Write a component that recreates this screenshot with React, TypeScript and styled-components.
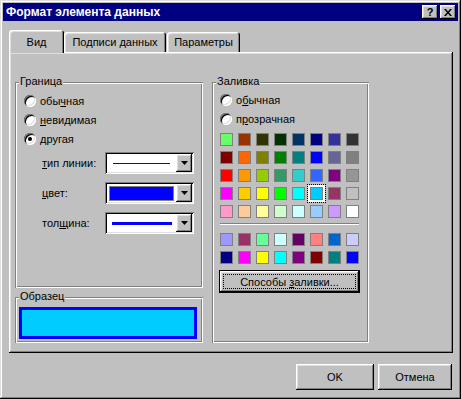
import styled, { createGlobalStyle, css } from "styled-components";

const GlobalStyle = createGlobalStyle`
  html, body {
    margin: 0;
    padding: 0;
    background: #c0c0c0;
  }
  body {
    font-family: "Liberation Sans", Arial, sans-serif;
    font-size: 11px;
    color: #000;
  }
`;

const raised = css`
  box-shadow: inset -1px -1px 0 #000, inset 1px 1px 0 #fff,
    inset -2px -2px 0 #808080, inset 2px 2px 0 #dfdfdf;
`;

const sunken = css`
  box-shadow: inset 1px 1px 0 #808080, inset -1px -1px 0 #fff,
    inset 2px 2px 0 #000, inset -2px -2px 0 #dfdfdf;
`;

const etched = css`
  box-shadow: inset 1px 1px 0 #808080, inset -1px -1px 0 #fff,
    inset 2px 2px 0 #fff, inset -2px -2px 0 #808080;
`;

const Window = styled.div`
  width: 461px;
  height: 399px;
  box-sizing: border-box;
  padding: 3px;
  display: flex;
  flex-direction: column;
  background: #c0c0c0;
  box-shadow: inset -1px -1px 0 #000, inset 1px 1px 0 #dfdfdf,
    inset -2px -2px 0 #808080, inset 2px 2px 0 #fff;
`;

const TitleBar = styled.div`
  height: 18px;
  flex: none;
  display: flex;
  align-items: center;
  padding: 0 2px 0 3px;
  background: #000080;
  color: #fff;
  font-weight: bold;
  font-size: 12px;
`;

const TitleButtons = styled.div`
  display: flex;
  gap: 2px;
  margin-left: auto;
`;

const TitleButton = styled.div`
  width: 16px;
  height: 14px;
  display: grid;
  place-items: center;
  background: #c0c0c0;
  color: #000;
  font-size: 11px;
  font-weight: bold;
  line-height: 1;
  ${raised}
`;

const Body = styled.div`
  flex: 1;
  display: flex;
  flex-direction: column;
  padding: 9px 5px 0 6px;
`;

const TabStrip = styled.div`
  height: 22px;
  display: flex;
  align-items: flex-end;
  position: relative;
  z-index: 1;
`;

const Tab = styled.div<{ $active?: boolean; $w: number; $gap?: number }>`
  width: ${(p) => p.$w}px;
  height: ${(p) => (p.$active ? 23 : 20)}px;
  margin-left: ${(p) => p.$gap ?? 0}px;
  margin-bottom: ${(p) => (p.$active ? -1 : 0)}px;
  box-sizing: border-box;
  display: flex;
  align-items: center;
  justify-content: center;
  padding-top: ${(p) => (p.$active ? 1 : 0)}px;
  background: #c0c0c0;
  border-radius: 3px 3px 0 0;
  box-shadow: inset 1px 1px 0 #fff, inset -1px 0 0 #000, inset -2px 0 0 #808080,
    inset 2px 2px 0 #dfdfdf;
`;

const Panel = styled.div`
  height: 301px;
  box-sizing: border-box;
  display: flex;
  gap: 9px;
  padding: 30px 0 0 6px;
  ${raised}
`;

const LeftCol = styled.div`
  width: 188px;
  display: flex;
  flex-direction: column;
  gap: 9px;
`;

const Group = styled.div<{ $h: number }>`
  position: relative;
  height: ${(p) => p.$h}px;
  box-sizing: border-box;
  ${etched}
`;

const Legend = styled.span`
  position: absolute;
  top: -7px;
  left: 4px;
  padding: 0 1px;
  line-height: 13px;
  background: #c0c0c0;
`;

const BorderGroup = styled(Group)`
  padding: 9px 0 0 9px;
`;

const FillGroup = styled(Group)`
  width: 157px;
  padding: 8px 0 0 8px;
`;

const SampleGroup = styled(Group)`
  padding: 10px 6px 4px 4px;
`;

const RadioRow = styled.div`
  height: 19px;
  display: flex;
  align-items: center;
  gap: 4px;
`;

const Radio = styled.span<{ $checked?: boolean }>`
  width: 12px;
  height: 12px;
  border-radius: 50%;
  background: #fff;
  position: relative;
  ${sunken}

  &::after {
    content: "";
    display: ${(p) => (p.$checked ? "block" : "none")};
    position: absolute;
    left: 4px;
    top: 4px;
    width: 4px;
    height: 4px;
    border-radius: 50%;
    background: #000;
  }
`;

const U = styled.span`
  text-decoration: underline;
`;

const ComboList = styled.div`
  margin-top: 4px;
  display: flex;
  flex-direction: column;
  gap: 8px;
`;

const ComboRow = styled.div`
  display: flex;
  align-items: center;
  padding-left: 18px;
`;

const ComboLabel = styled.span`
  width: 63px;
`;

const Combo = styled.div`
  width: 89px;
  height: 22px;
  box-sizing: border-box;
  padding: 2px;
  display: flex;
  background: #fff;
  ${sunken}
`;

const ComboField = styled.div`
  flex: 1;
  display: flex;
  align-items: center;
`;

const LineSample = styled.div<{ $h: number; $w: number; $l: number }>`
  width: ${(p) => p.$w}px;
  height: ${(p) => p.$h}px;
  margin-left: ${(p) => p.$l}px;
  background: #0000ff;
`;

const ColorSample = styled.div`
  width: 65px;
  height: 15px;
  margin-left: 2px;
  box-sizing: border-box;
  border: 1px solid #808080;
  background: #0000ff;
`;

const DropButton = styled.div`
  width: 16px;
  height: 18px;
  display: grid;
  place-items: center;
  background: #c0c0c0;
  ${raised}
`;

const Sample = styled.div`
  height: 32px;
  box-sizing: border-box;
  border: 3px solid #0000ff;
  background: #00ccff;
`;

const Palette = styled.div`
  margin-top: 5px;
  display: grid;
  grid-template-columns: repeat(8, 13px);
  gap: 5px;
`;

const Swatch = styled.div<{ $c: string; $selected?: boolean }>`
  width: 13px;
  height: 13px;
  box-sizing: border-box;
  background: ${(p) => p.$c};
  box-shadow: inset 0 0 0 1px #808080
    ${(p) => (p.$selected ? ", 0 0 0 2px #fff" : "")};
  outline: ${(p) => (p.$selected ? "1px dotted #000" : "none")};
  outline-offset: 2px;
`;

const Separator = styled.div`
  width: 139px;
  margin: 5px 0 8px;
  border-top: 1px solid #808080;
  border-bottom: 1px solid #fff;
`;

const Button = styled.div<{ $w: number; $h: number }>`
  width: ${(p) => p.$w}px;
  height: ${(p) => p.$h}px;
  box-sizing: border-box;
  display: flex;
  align-items: center;
  justify-content: center;
  background: #c0c0c0;
  ${raised}
`;

const FillButton = styled(Button)`
  margin: 6px 0 0 -1px;
  position: relative;
  box-shadow: inset 0 0 0 1px #000, inset -2px -2px 0 #000, inset 2px 2px 0 #fff,
    inset -3px -3px 0 #808080, inset 3px 3px 0 #dfdfdf;

  &::after {
    content: "";
    position: absolute;
    inset: 4px;
    border: 1px dotted #000;
  }
`;

const Footer = styled.div`
  margin-top: 11px;
  display: flex;
  justify-content: flex-end;
  gap: 4px;
  padding-right: 1px;
`;

const palette = [
  ["#66ff66", "#993300", "#333300", "#003300", "#003366", "#000080", "#333399", "#333333"],
  ["#800000", "#ff6600", "#808000", "#008000", "#008080", "#0000ff", "#666699", "#808080"],
  ["#ff0000", "#ff9900", "#99cc00", "#339966", "#33cccc", "#3366ff", "#800080", "#969696"],
  ["#ff00ff", "#ffcc00", "#ffff00", "#00ff00", "#00ffff", "#00ccff", "#993366", "#c0c0c0"],
  ["#ff99cc", "#ffcc99", "#ffff99", "#ccffcc", "#ccffff", "#99ccff", "#cc99ff", "#ffffff"],
];

const chartColors = [
  ["#9999ff", "#993366", "#66ff99", "#ccffff", "#660066", "#ff8080", "#0066cc", "#ccccff"],
  ["#000080", "#ff00ff", "#ffff00", "#00ffff", "#800080", "#800000", "#008080", "#0000ff"],
];

function Arrow() {
  return (
    <svg width="7" height="4" viewBox="0 0 7 4">
      <path d="M0 0h7L3.5 4z" fill="#000" />
    </svg>
  );
}

function ComboBox({ children }: { children: React.ReactNode }) {
  return (
    <Combo>
      <ComboField>{children}</ComboField>
      <DropButton>
        <Arrow />
      </DropButton>
    </Combo>
  );
}

export default function App(): JSX.Element {
  return (
    <>
      <GlobalStyle />
      <Window>
        <TitleBar>
          Формат элемента данных
          <TitleButtons>
            <TitleButton>?</TitleButton>
            <TitleButton>
              <svg width="8" height="7" viewBox="0 0 8 7">
                <path d="M0 0h2l2 2.5L6 0h2L5 3.5 8 7H6L4 4.5 2 7H0l3-3.5z" fill="#000" />
              </svg>
            </TitleButton>
          </TitleButtons>
        </TitleBar>

        <Body>
          <TabStrip>
            <Tab $active $w={55}>
              Вид
            </Tab>
            <Tab $w={102}>Подписи данных</Tab>
            <Tab $w={73} $gap={1}>
              Параметры
            </Tab>
          </TabStrip>

          <Panel>
            <LeftCol>
              <BorderGroup $h={206}>
                <Legend>Граница</Legend>
                <RadioRow>
                  <Radio />
                  <span>
                    обы<U>ч</U>ная
                  </span>
                </RadioRow>
                <RadioRow>
                  <Radio />
                  <span>
                    <U>н</U>евидимая
                  </span>
                </RadioRow>
                <RadioRow>
                  <Radio $checked />
                  <span>другая</span>
                </RadioRow>
                <ComboList>
                  <ComboRow>
                    <ComboLabel>
                      <U>т</U>ип линии:
                    </ComboLabel>
                    <ComboBox>
                      <LineSample $h={1} $w={57} $l={6} />
                    </ComboBox>
                  </ComboRow>
                  <ComboRow>
                    <ComboLabel>
                      <U>ц</U>вет:
                    </ComboLabel>
                    <ComboBox>
                      <ColorSample />
                    </ComboBox>
                  </ComboRow>
                  <ComboRow>
                    <ComboLabel>
                      тол<U>щ</U>ина:
                    </ComboLabel>
                    <ComboBox>
                      <LineSample $h={3} $w={60} $l={5} />
                    </ComboBox>
                  </ComboRow>
                </ComboList>
              </BorderGroup>

              <SampleGroup $h={46}>
                <Legend>Образец</Legend>
                <Sample />
              </SampleGroup>
            </LeftCol>

            <FillGroup $h={261}>
              <Legend>Заливка</Legend>
              <RadioRow>
                <Radio />
                <span>
                  о<U>б</U>ычная
                </span>
              </RadioRow>
              <RadioRow>
                <Radio />
                <span>
                  п<U>р</U>озрачная
                </span>
              </RadioRow>
              <Palette>
                {palette.flat().map((c, i) => (
                  <Swatch key={i} $c={c} $selected={i === 29} />
                ))}
              </Palette>
              <Separator />
              <Palette style={{ marginTop: 0 }}>
                {chartColors.flat().map((c, i) => (
                  <Swatch key={i} $c={c} />
                ))}
              </Palette>
              <FillButton $w={141} $h={23}>
                <span>
                  Способы <U>з</U>аливки...
                </span>
              </FillButton>
            </FillGroup>
          </Panel>

          <Footer>
            <Button $w={78} $h={26}>
              OK
            </Button>
            <Button $w={74} $h={26}>
              Отмена
            </Button>
          </Footer>
        </Body>
      </Window>
    </>
  );
}
